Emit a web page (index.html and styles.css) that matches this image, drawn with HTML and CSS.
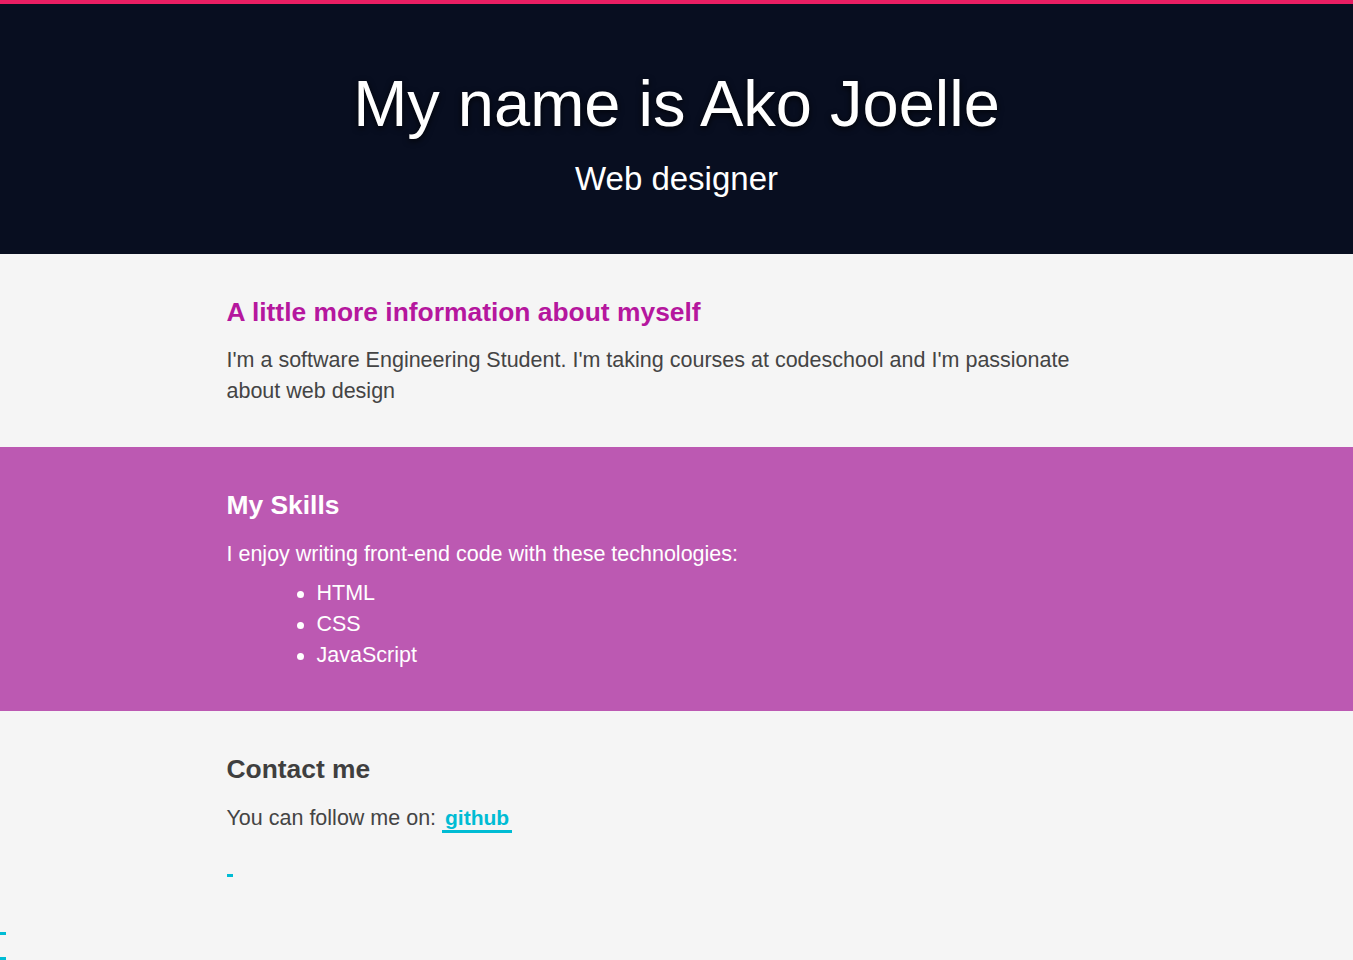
FILE: index.html
```html
<!DOCTYPE html>
<html lang="en">
<head>
<meta charset="utf-8">
<title>Ako Joelle</title>
<link rel="stylesheet" href="styles.css">
</head>
<body>
<header class="hero">
  <h1 class="hero-title">My name is Ako Joelle</h1>
  <p class="hero-sub">Web designer</p>
</header>
<section class="band band-light">
  <div class="container">
    <h2 class="band-title title-purple">A little more information about myself</h2>
    <p class="text">I'm a software Engineering Student. I'm taking courses at codeschool and I'm passionate about web design</p>
  </div>
</section>
<section class="band band-purple">
  <div class="container">
    <h2 class="band-title">My Skills</h2>
    <p class="text text-skills">I enjoy writing front-end code with these technologies:</p>
    <ul class="skills">
      <li>HTML</li>
      <li>CSS</li>
      <li>JavaScript</li>
    </ul>
  </div>
</section>
<section class="band band-light band-contact">
  <div class="container">
    <h2 class="band-title title-dark">Contact me</h2>
    <p class="text">You can follow me on: <a class="link" href="#">github</a></p>
    <p class="text text-gap"><a class="link" href="#"></a></p>
  </div>
  <div class="footer-links">
    <div class="footer-line"><a class="link" href="#"></a></div>
    <div class="footer-line"><a class="link" href="#"></a></div>
  </div>
</section>
</body>
</html>
```
FILE: styles.css
```css
html, body {
  margin: 0;
  padding: 0;
}
body {
  font-family: "Liberation Sans", Arial, sans-serif;
  background: #f5f5f5;
  color: #444444;
  border-top: 4px solid #e91e63;
}
.hero {
  background: #080e20;
  color: #ffffff;
  text-align: center;
  padding: 63px 0 57px;
}
.hero-title {
  margin: 0;
  font-size: 65px;
  line-height: 74px;
  font-weight: normal;
  text-shadow: 0 2px 6px rgba(0, 0, 0, 0.8);
}
.hero-sub {
  margin: 19px 0 0;
  font-size: 33px;
  line-height: 37px;
}
.band {
  padding: 43px 0 40px;
}
.band-light {
  background: #f5f5f5;
}
.band-purple {
  background: #bc59b2;
  color: #ffffff;
  padding-bottom: 40px;
}
.band-contact {
  padding-bottom: 40px;
}
.container {
  width: 900px;
  margin: 0 auto;
}
.band-title {
  margin: 0;
  font-size: 26.4px;
  line-height: 30px;
  font-weight: bold;
}
.title-purple {
  color: #b5179e;
}
.title-dark {
  color: #3f3f3f;
}
.text {
  margin: 18px 0 0;
  font-size: 21.5px;
  line-height: 31px;
}
.text-skills {
  margin-top: 19px;
}
.text-gap {
  margin-top: 12px;
}
.skills {
  margin: 8px 0 0;
  padding-left: 90px;
  list-style: none;
  font-size: 21.5px;
  line-height: 31px;
}
.skills li::before {
  content: "";
  display: inline-block;
  width: 7px;
  height: 7px;
  border-radius: 50%;
  background: #ffffff;
  margin-left: -20px;
  margin-right: 13px;
  vertical-align: middle;
}
.link {
  color: #00bcd4;
  font-weight: bold;
  font-size: 21px;
  text-decoration: none;
  padding: 0 3px 1px;
  border-bottom: 3px solid #00bcd4;
}
.footer-links {
  margin-top: 29px;
  font-size: 21px;
  line-height: 25px;
}
```
